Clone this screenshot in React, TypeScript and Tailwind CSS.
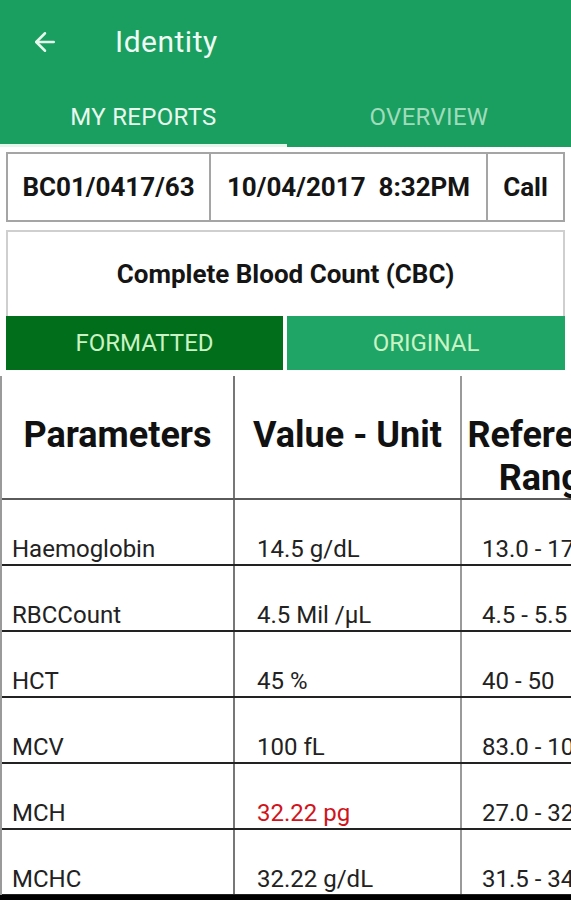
import { ArrowLeft } from "lucide-react";

const rows = [
    { name: "Haemoglobin", value: "14.5 g/dL", range: "13.0 - 17.0", high: false },
    { name: "RBCCount", value: "4.5 Mil /µL", range: "4.5 - 5.5", high: false },
    { name: "HCT", value: "45 %", range: "40 - 50", high: false },
    { name: "MCV", value: "100 fL", range: "83.0 - 101.0", high: false },
    { name: "MCH", value: "32.22 pg", range: "27.0 - 32.0", high: true },
    { name: "MCHC", value: "32.22 g/dL", range: "31.5 - 34.5", high: false },
];

export default function App() {
    return (
        <div className="w-[571px] h-[900px] overflow-hidden bg-white font-['Roboto',sans-serif] relative">
            {/* App bar */}
            <div className="bg-[#1a9f60]">
                <div className="h-[84px] flex items-center">
                    <ArrowLeft className="ml-[30px] w-[30px] h-[30px] text-[#e6f7ee]" strokeWidth={2} />
                    <h1 className="ml-[55px] text-[30px] tracking-[0.5px] text-[#eefaf3] leading-none">Identity</h1>
                </div>
                <div className="flex h-[63px]">
                    <div className="w-[287px] flex flex-col">
                        <div className="flex-1 flex items-center justify-center pt-[6px] text-[24px] tracking-[0.3px] text-[#e8f8ef]">MY REPORTS</div>
                        <div className="h-[3px] bg-[#e4f6ec]" />
                    </div>
                    <div className="flex-1 flex items-center justify-center pt-[6px] pb-[3px] text-[24px] tracking-[0.3px] text-[#9fdcbc]">OVERVIEW</div>
                </div>
            </div>

            {/* Report info */}
            <div className="mx-[6px] mt-[5px] h-[70px] flex border-2 border-[#a5a5a5] text-[26px] font-bold text-[#151515]">
                <div className="w-[203px] flex items-center justify-center border-r-2 border-[#a5a5a5]">BC01/0417/63</div>
                <div className="w-[277px] flex items-center justify-center border-r-2 border-[#a5a5a5] whitespace-pre">10/04/2017  8:32PM</div>
                <div className="flex-1 flex items-center justify-center">Call</div>
            </div>

            <div className="mx-[6px] mt-[8px] border-2 border-b-0 border-[#cfcfcf]">
                <div className="h-[84px] flex items-center justify-center text-[26px] font-bold text-[#151515]">
                    Complete Blood Count (CBC)
                </div>
            </div>
            <div className="mx-[6px] flex gap-[4px] h-[54px] text-[24px] text-[#c9f3c4]">
                <div className="w-[277px] bg-[#006e1a] flex items-center justify-center">FORMATTED</div>
                <div className="flex-1 bg-[#1fa566] flex items-center justify-center">ORIGINAL</div>
            </div>

            {/* Table */}
            <div className="mt-[6px] w-[720px] border-l-2 border-[#9a9a9a]">
                <div className="flex h-[124px] border-b-2 border-[#5a5a5a] text-[36px] font-bold text-[#111] leading-[43px]">
                    <div className="w-[233px] pt-[38px] text-center border-r-2 border-[#777]">Parameters</div>
                    <div className="w-[227px] pt-[38px] text-center border-r-2 border-[#9a9a9a] whitespace-nowrap">Value - Unit</div>
                    <div className="w-[176px] pt-[38px] text-center">Reference Range</div>
                </div>
                {rows.map((r) => (
                    <div key={r.name} className="flex h-[66px] border-b-2 border-[#222] text-[24px] text-[#222] leading-none">
                        <div className="w-[233px] flex items-end pl-[10px] pb-[3px] border-r-2 border-[#777]">{r.name}</div>
                        <div
                            className={`w-[227px] flex items-end pl-[22px] pb-[3px] border-r-2 border-[#9a9a9a] ${r.high ? "text-[#d0141c]" : ""}`}
                        >
                            {r.value}
                        </div>
                        <div className="flex-1 flex items-end pl-[20px] pb-[3px] whitespace-nowrap">{r.range}</div>
                    </div>
                ))}
            </div>

            <div className="absolute left-0 right-0 bottom-0 h-[5px] bg-black" />
        </div>
    );
}
